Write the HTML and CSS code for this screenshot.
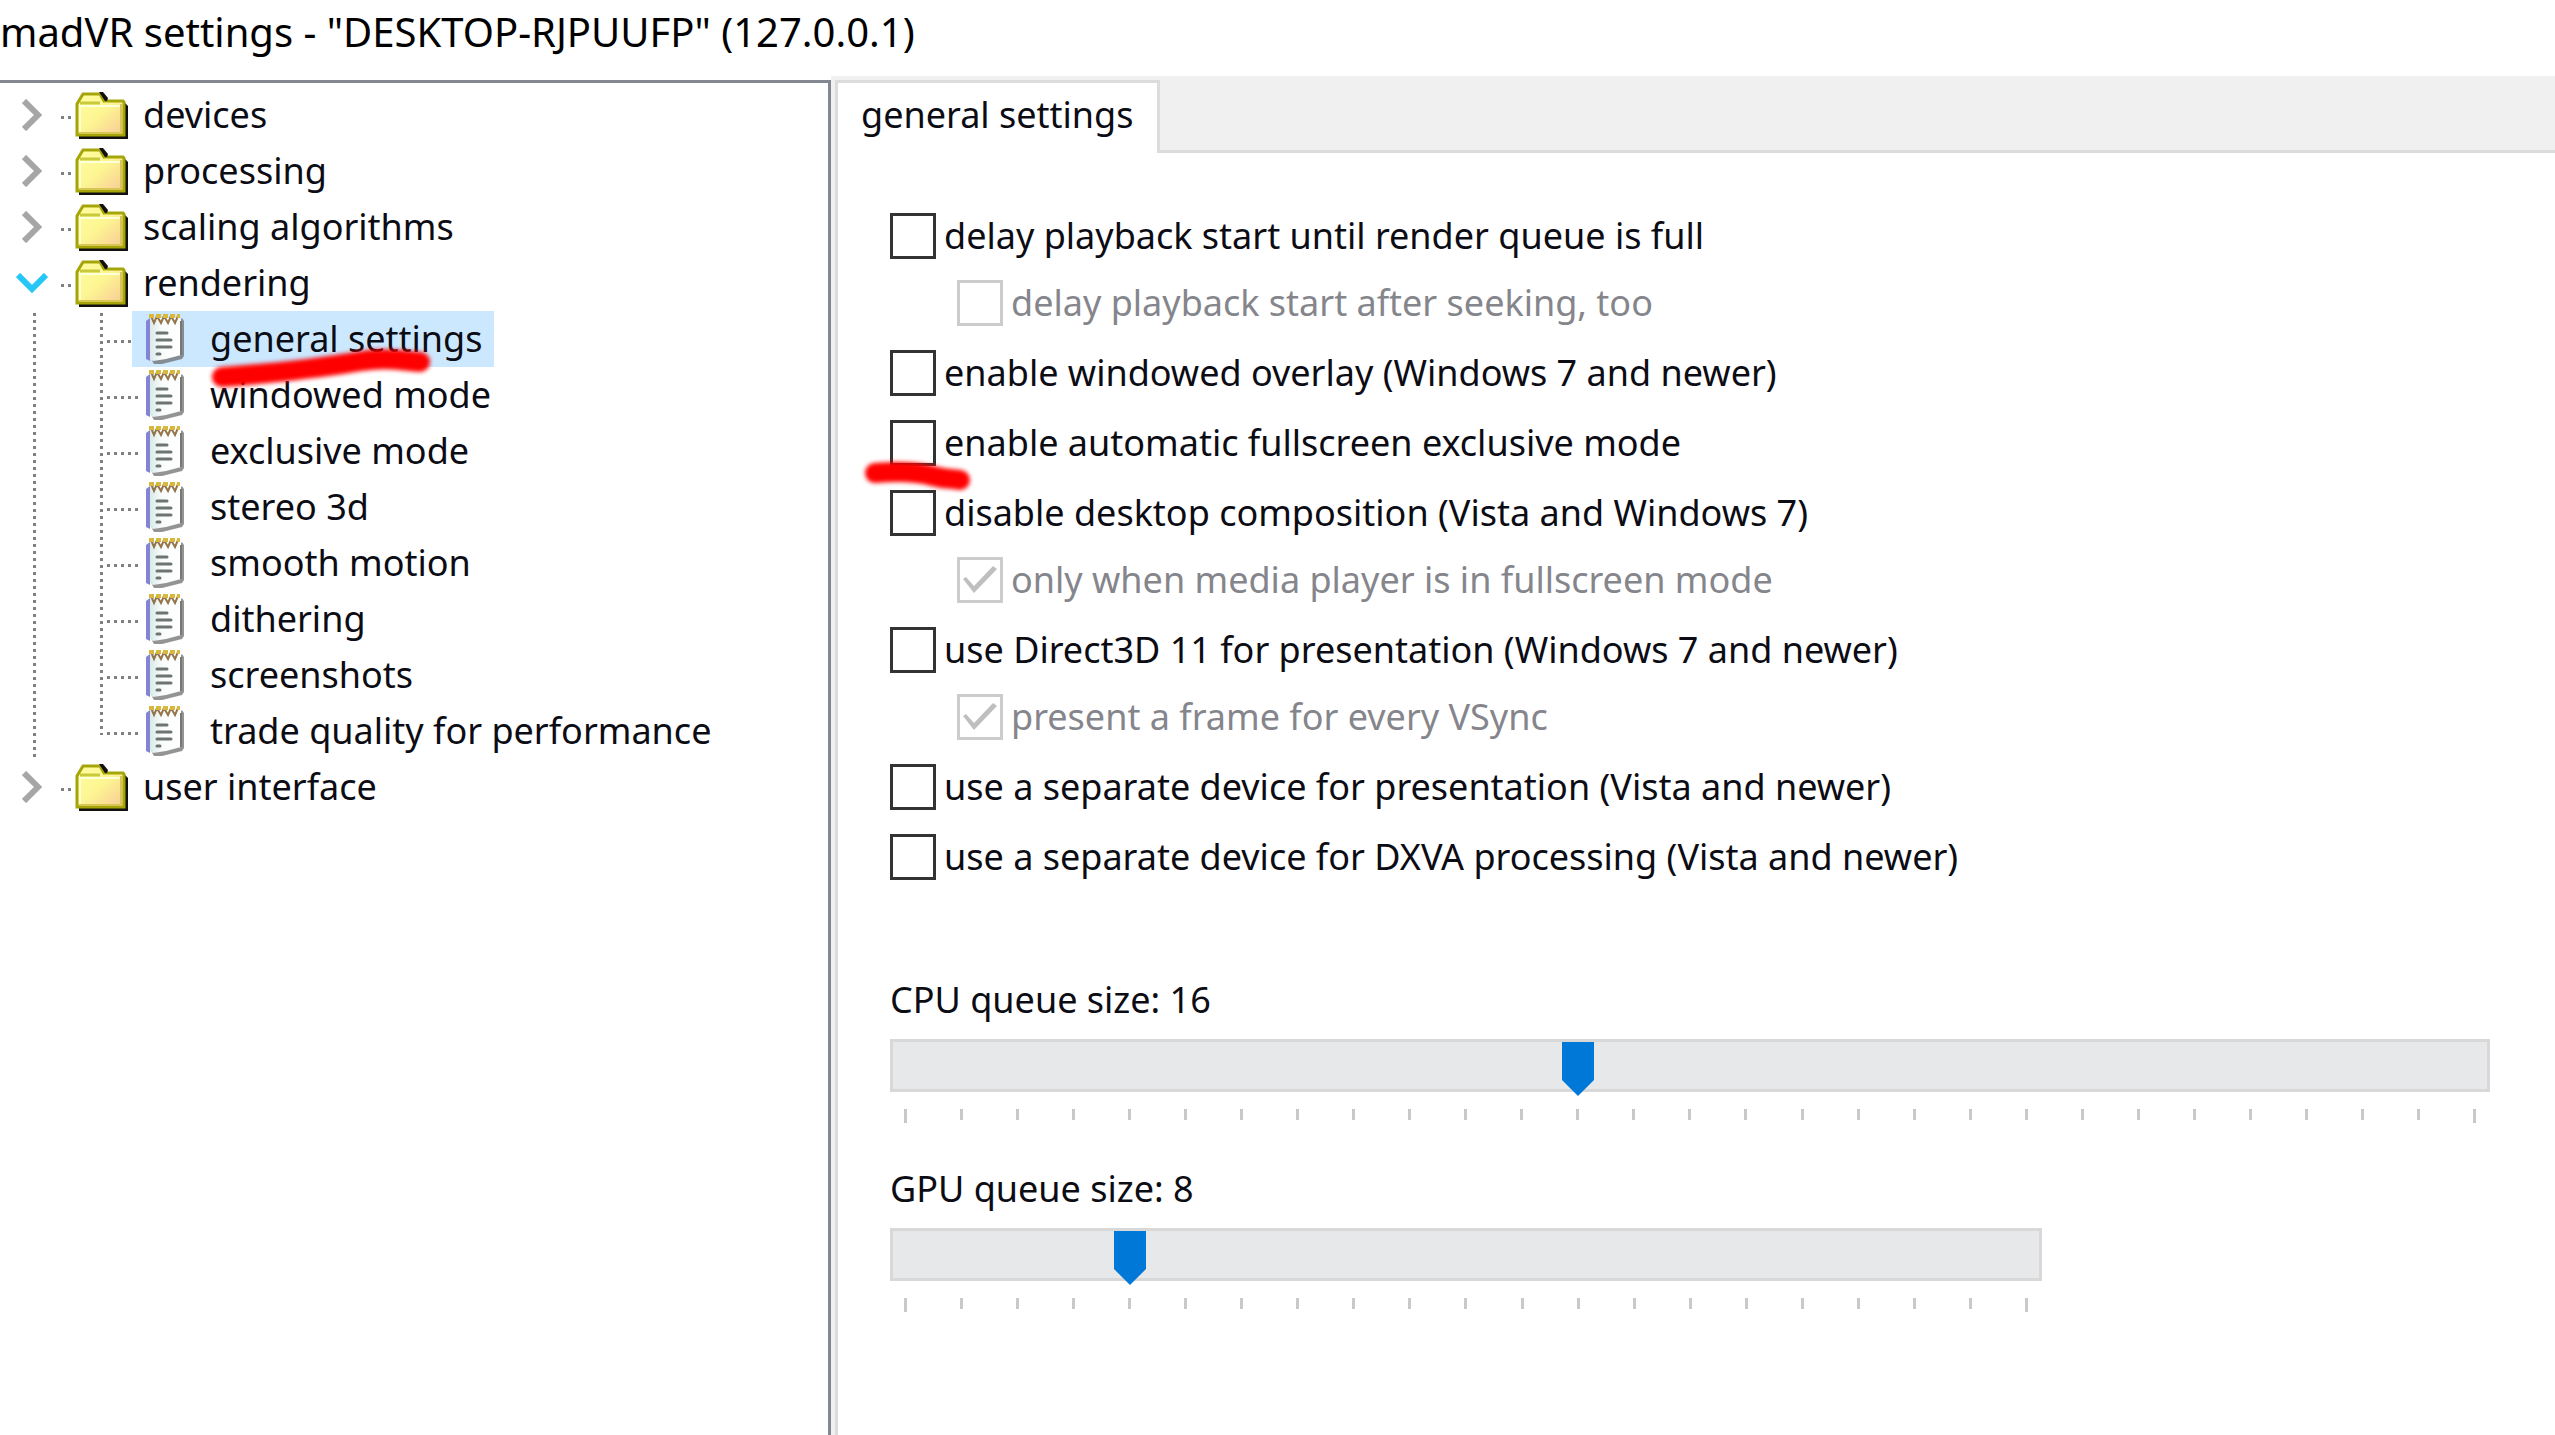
FILE: index.html
```html
<!DOCTYPE html>
<html lang="en">
<head>
  <meta charset="utf-8">
  <meta name="viewport" content="width=device-width, initial-scale=1">
  <title>madVR settings</title>
  <link rel="stylesheet" href="styles.css">
</head>
<body>

  <!-- shared icons -->
  <svg class="defs" aria-hidden="true">
    <defs>
      <linearGradient id="folder-fill" x1="0" y1="0" x2="1" y2="1">
        <stop offset="0" stop-color="#ffffa0"/>
        <stop offset="0.5" stop-color="#fdf592"/>
        <stop offset="1" stop-color="#f8c898"/>
      </linearGradient>
      <linearGradient id="page-fill" x1="0" y1="0" x2="1" y2="0">
        <stop offset="0" stop-color="#d9ebe8"/>
        <stop offset="0.4" stop-color="#fafcfc"/>
        <stop offset="1" stop-color="#ffffff"/>
      </linearGradient>
    </defs>
    <symbol id="chevron" viewBox="0 0 20 32">
      <path d="M2 2l14 14L2 30" fill="none" stroke="currentColor" stroke-width="6"/>
    </symbol>
    <symbol id="folder" viewBox="0 0 53 47">
      <path d="M4 11h46l3 3v33H4z" fill="#111"/>
      <path d="M2 43V12l6-10h17l4 7h19l1 1v33z" fill="url(#folder-fill)" stroke="#a5a50a" stroke-width="3"/>
      <path d="M5 11h20" fill="none" stroke="#c9c93c" stroke-width="3"/>
      <path d="M5 40V14h40" fill="none" stroke="#ffffd8" stroke-width="2"/>
      <path d="M24 0h4l5 6-1 3h-2z" fill="#111"/>
      <path d="M4 41h42V12" fill="none" stroke="#d6c653" stroke-width="2"/>
    </symbol>
    <symbol id="notes" viewBox="0 0 40 52">
      <path d="M6 46l3 5h8l20-5 2-3V8l-2-3z" fill="#666" opacity="0.7"/>
      <path d="M1 8l4-3v43l-4-2z" fill="#8583d6"/>
      <path d="M5 5h28q3 0 3 3v34l-15 4-13 2-3-2z" fill="url(#page-fill)"/>
      <path d="M36 8v34" fill="none" stroke="#777" stroke-width="2"/>
      <path d="M6 3l3 7 3-7 4 7 3-7 4 7 3-7 4 7 3-7" fill="none" stroke="#94744a" stroke-width="2"/>
      <path d="M4 3h31" fill="none" stroke="#d9b93c" stroke-width="4" stroke-dasharray="5 2"/>
      <path d="M12 20h10M12 27h14M12 34h14M12 41h3" fill="none" stroke="#6d7572" stroke-width="3" stroke-linecap="round"/>
    </symbol>
  </svg>

  <header class="titlebar">
    <h1>madVR settings - "DESKTOP-RJPUUFP" (127.0.0.1)</h1>
  </header>

  <div class="window">

    <nav class="tree" aria-label="settings tree">
      <details class="node">
        <summary><svg class="chevron"><use href="#chevron"/></svg><svg class="folder"><use href="#folder"/></svg>devices</summary>
      </details>
      <details class="node">
        <summary><svg class="chevron"><use href="#chevron"/></svg><svg class="folder"><use href="#folder"/></svg>processing</summary>
      </details>
      <details class="node">
        <summary><svg class="chevron"><use href="#chevron"/></svg><svg class="folder"><use href="#folder"/></svg>scaling algorithms</summary>
      </details>
      <details class="node" open>
        <summary><svg class="chevron"><use href="#chevron"/></svg><svg class="folder"><use href="#folder"/></svg>rendering</summary>
        <ul class="leaves">
          <li>
            <a class="selected" href="#general"><svg class="notes"><use href="#notes"/></svg>general settings</a>
            <svg class="marker marker-tree" viewBox="0 0 230 50" aria-hidden="true"><path d="M17 32C70 28 120 22 150 17S190 15 215 17"/></svg>
          </li>
          <li><a href="#windowed"><svg class="notes"><use href="#notes"/></svg>windowed mode</a></li>
          <li><a href="#exclusive"><svg class="notes"><use href="#notes"/></svg>exclusive mode</a></li>
          <li><a href="#stereo"><svg class="notes"><use href="#notes"/></svg>stereo 3d</a></li>
          <li><a href="#motion"><svg class="notes"><use href="#notes"/></svg>smooth motion</a></li>
          <li><a href="#dithering"><svg class="notes"><use href="#notes"/></svg>dithering</a></li>
          <li><a href="#screenshots"><svg class="notes"><use href="#notes"/></svg>screenshots</a></li>
          <li><a href="#trade"><svg class="notes"><use href="#notes"/></svg>trade quality for performance</a></li>
        </ul>
      </details>
      <details class="node">
        <summary><svg class="chevron"><use href="#chevron"/></svg><svg class="folder"><use href="#folder"/></svg>user interface</summary>
      </details>
    </nav>

    <main class="panel">
      <div class="tabs" role="tablist">
        <button class="tab" type="button" role="tab" aria-selected="true">general settings</button>
      </div>

      <form class="page" id="general">
        <div class="options">
          <label class="option"><input type="checkbox">delay playback start until render queue is full</label>
          <label class="option sub"><input type="checkbox" disabled>delay playback start after seeking, too</label>
          <label class="option"><input type="checkbox">enable windowed overlay (Windows 7 and newer)</label>
          <label class="option">
            <input type="checkbox">enable automatic fullscreen exclusive mode
            <svg class="marker marker-option" viewBox="0 0 120 50" aria-hidden="true"><path d="M17 22C40 20 60 21 75 25S92 27 102 29"/></svg>
          </label>
          <label class="option"><input type="checkbox">disable desktop composition (Vista and Windows 7)</label>
          <label class="option sub"><input type="checkbox" checked disabled>only when media player is in fullscreen mode</label>
          <label class="option"><input type="checkbox">use Direct3D 11 for presentation (Windows 7 and newer)</label>
          <label class="option sub"><input type="checkbox" checked disabled>present a frame for every VSync</label>
          <label class="option"><input type="checkbox">use a separate device for presentation (Vista and newer)</label>
          <label class="option"><input type="checkbox">use a separate device for DXVA processing (Vista and newer)</label>
        </div>

        <div class="queue">
          <label for="cpu-queue">CPU queue size: 16</label>
          <input type="range" id="cpu-queue" min="4" max="32" value="16">
          <div class="ticks">
            <i></i><i></i><i></i><i></i><i></i><i></i><i></i><i></i><i></i><i></i>
            <i></i><i></i><i></i><i></i><i></i><i></i><i></i><i></i><i></i><i></i>
            <i></i><i></i><i></i><i></i><i></i><i></i><i></i><i></i><i></i>
          </div>
        </div>

        <div class="queue queue-gpu">
          <label for="gpu-queue">GPU queue size: 8</label>
          <input type="range" id="gpu-queue" min="4" max="24" value="8">
          <div class="ticks">
            <i></i><i></i><i></i><i></i><i></i><i></i><i></i><i></i><i></i><i></i>
            <i></i><i></i><i></i><i></i><i></i><i></i><i></i><i></i><i></i><i></i>
            <i></i>
          </div>
        </div>
      </form>
    </main>

  </div>

</body>
</html>
```
FILE: styles.css
```css
* {
  margin: 0;
  padding: 0;
  box-sizing: border-box;
}

:root {
  --text: #0c0c14;
  --muted: #85858c;
  --face: #f0f0f0;
  --line: #dcdcdc;
  --tree-line: #828790;
  --dots: #808080;
  --select: #cce8ff;
  --accent: #0078d7;
}

body {
  display: flex;
  flex-direction: column;
  min-height: 100vh;
  background: #fff;
  color: var(--text);
  font-family: "Noto Sans", sans-serif;
  font-size: 36px;
  line-height: 46px;
}

button,
input {
  font: inherit;
  color: inherit;
}

.defs {
  position: absolute;
  width: 0;
  height: 0;
}

.titlebar {
  height: 76px;
  padding-top: 8px;
}
.titlebar h1 {
  color: #000;
  font-size: 40px;
  font-weight: 400;
  line-height: 48px;
  white-space: nowrap;
}

.window {
  flex: 1;
  display: flex;
}

/* tree */

.tree {
  flex: 0 0 831px;
  margin-top: 4px;
  padding-top: 4px;
  border-top: 3px solid var(--tree-line);
  border-right: 3px solid var(--tree-line);
}

/* the background is the short connector between arrow and folder */
.node summary {
  display: flex;
  align-items: center;
  height: 56px;
  padding-left: 22px;
  background: repeating-linear-gradient(90deg, var(--dots) 0 3px, transparent 3px 7px) 61px 29px / 10px 3px no-repeat;
  list-style: none;
  cursor: pointer;
}
.node summary::-webkit-details-marker {
  display: none;
}

.chevron {
  width: 20px;
  height: 32px;
  color: #a6a6a6;
}
.node[open] .chevron {
  color: #26c6f5;
  transform: rotate(90deg);
}

.folder {
  width: 53px;
  height: 47px;
  margin-left: 33px;
  margin-right: 15px;
}

.leaves {
  list-style: none;
  padding-left: 100px;
  background: repeating-linear-gradient(var(--dots) 0 3px, transparent 3px 7px) 33px 2px / 3px 100% no-repeat;
}
.leaves li {
  display: flex;
  position: relative;
  padding-left: 32px;
  background:
    repeating-linear-gradient(var(--dots) 0 3px, transparent 3px 7px) 0 2px / 3px 100% no-repeat,
    repeating-linear-gradient(90deg, var(--dots) 0 3px, transparent 3px 7px) 7px 29px / 32px 3px no-repeat;
}
.leaves li:last-child {
  background-size: 3px 30px, 32px 3px;
}
.leaves a {
  display: flex;
  align-items: center;
  height: 56px;
  padding: 0 12px 0 13px;
  color: inherit;
  text-decoration: none;
}
.leaves a.selected {
  background: var(--select);
}
.notes {
  width: 40px;
  height: 52px;
  margin-right: 25px;
}

/* red pen strokes */

.marker {
  position: absolute;
  z-index: 1;
  pointer-events: none;
  filter: blur(2px);
}
.marker path {
  fill: none;
  stroke: #f00;
  stroke-width: 20;
  stroke-linecap: round;
}
.marker-tree {
  width: 230px;
  height: 50px;
  left: 105px;
  top: 34px;
}
.marker-option {
  width: 120px;
  height: 50px;
  left: -32px;
  top: 31px;
}

/* panel */

.panel {
  flex: 1;
  min-width: 0;
  display: flex;
  flex-direction: column;
  padding: 4px 0 0 4px;
  background: var(--face);
}

.tabs {
  display: flex;
  box-shadow: inset 0 -3px var(--line);
}
.tab {
  height: 73px;
  padding: 0 24px 6px 23px;
  border: 3px solid var(--line);
  border-bottom: 0;
  background: #fff;
}

.page {
  flex: 1;
  padding: 60px 65px 48px 52px;
  border-left: 3px solid var(--line);
  background: #fff;
}

.options {
  display: flex;
  flex-direction: column;
  align-items: flex-start;
  gap: 24px;
  margin-bottom: 97px;
}
.option {
  display: flex;
  align-items: center;
  position: relative;
  gap: 8px;
  height: 46px;
}
.option.sub {
  margin: -3px 0 0 67px;
  color: var(--muted);
}
.option input {
  appearance: none;
  width: 46px;
  height: 46px;
  border: 3px solid #333;
  background: #fff;
}
.option input:disabled {
  border-color: #ccc;
}
.option input:checked::before {
  content: "";
  display: block;
  width: 40px;
  height: 40px;
  background: #bfbfbf;
  clip-path: polygon(3px 19px, 6px 17px, 14px 26px, 33px 6px, 37px 9px, 14px 33px);
}

.queue + .queue {
  margin-top: 43px;
}
.queue label {
  display: block;
  margin-bottom: 16px;
}
.queue-gpu {
  width: 72%;
}

input[type="range"] {
  appearance: none;
  display: block;
  width: 100%;
  height: 53px;
  background: none;
}
input[type="range"]::-webkit-slider-runnable-track {
  height: 53px;
  background: #e7e8ea;
  box-shadow: inset 0 0 0 3px #d8d8d8;
}
input[type="range"]::-webkit-slider-thumb {
  appearance: none;
  width: 32px;
  height: 54px;
  margin-top: 3px;
  background: var(--accent);
  clip-path: polygon(0 0, 100% 0, 100% 38px, 50% 100%, 0 38px);
}

.ticks {
  display: flex;
  justify-content: space-between;
  height: 14px;
  margin-top: 17px;
  padding: 0 14px;
}
.ticks i {
  width: 3px;
  height: 11px;
  background: #c9c9c9;
}
.ticks i:first-child,
.ticks i:last-child {
  height: 14px;
}
```
